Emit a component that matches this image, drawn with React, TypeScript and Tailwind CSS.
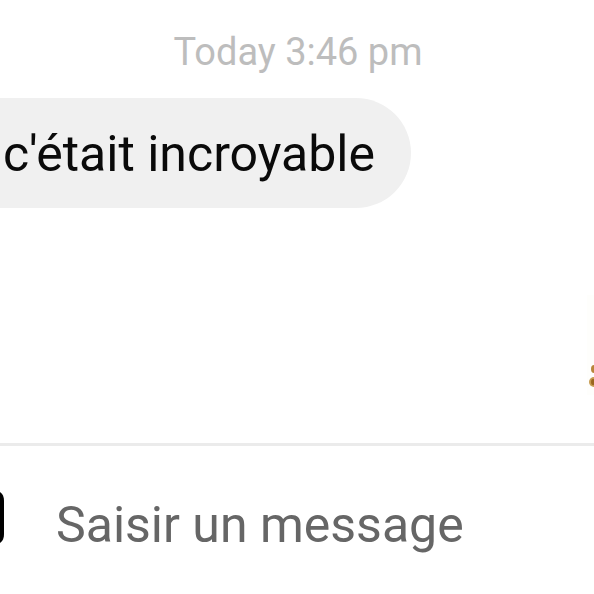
function CameraIcon() {
  return (
    <svg width="4" height="52" viewBox="0 0 4 52" aria-hidden="true">
      <path d="M0 1C3 3 4 6 4 10V43C4 47 3 50 0 52Z" fill="#000" />
    </svg>
  );
}

function Sticker() {
  return (
    <svg width="8" height="100" viewBox="0 0 8 100" aria-hidden="true">
      <rect x="1" width="7" height="100" fill="#fefefc" />
      <ellipse cx="8" cy="74" rx="3" ry="4" fill="#b9853a" />
      <ellipse cx="8" cy="87" rx="5" ry="5" fill="#c69a50" />
      <ellipse cx="7" cy="87" rx="2" ry="3" fill="#99651f" />
    </svg>
  );
}

export default function App() {
  return (
    <main className="min-h-screen flex flex-col bg-white font-[Roboto,sans-serif] overflow-hidden">
      {/* Conversation */}
      <section className="flex flex-col">
        <time className="pt-7 pl-0.5 text-center text-[38px] leading-[48px] text-[#bdbdbd]">
          Today 3:46 pm
        </time>

        <p className="mt-[22px] self-start rounded-r-full bg-[#f0f0f0] pl-[3px] pr-9 pt-[26px] pb-6 text-[50px] leading-[60px] text-[#0a0a0a]">
          c'était incroyable
        </p>

        <div className="mt-[87px] mb-12 flex justify-end">
          <Sticker />
        </div>
      </section>

      {/* Composer */}
      <form className="flex flex-1 items-start border-t-3 border-[#ebebeb] pt-[45px]">
        <button type="button" aria-label="Camera" className="flex shrink-0">
          <CameraIcon />
        </button>
        <input
          type="text"
          aria-label="Message"
          placeholder="Saisir un message"
          className="ml-[52px] min-w-0 flex-1 h-[68px] text-[50px] outline-none placeholder:text-[#666666]"
        />
      </form>
    </main>
  );
}
